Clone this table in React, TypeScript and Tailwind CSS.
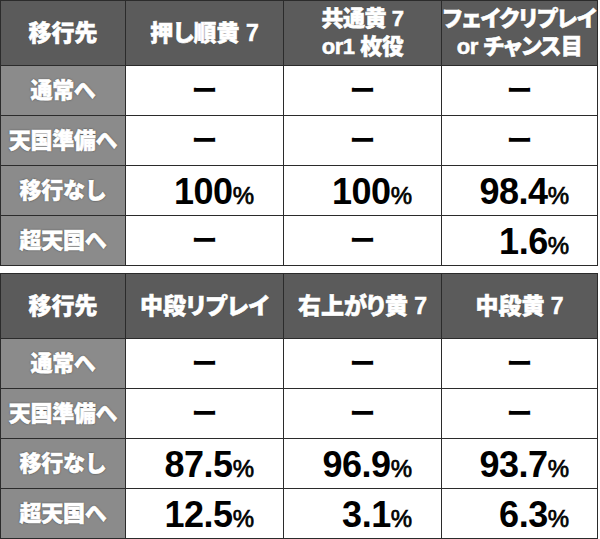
import React from 'react'

type Cell = string | { num: string }

interface TableData {
  heads: string[][]
  rows: { label: string; cells: Cell[] }[]
}

const DASH = 'ー'

const tables: TableData[] = [
  {
    heads: [['移行先'], ['押し順黄 7'], ['共通黄 7', 'or1 枚役'], ['フェイクリプレイ', 'or チャンス目']],
    rows: [
      { label: '通常へ', cells: [DASH, DASH, DASH] },
      { label: '天国準備へ', cells: [DASH, DASH, DASH] },
      { label: '移行なし', cells: [{ num: '100' }, { num: '100' }, { num: '98.4' }] },
      { label: '超天国へ', cells: [DASH, DASH, { num: '1.6' }] },
    ],
  },
  {
    heads: [['移行先'], ['中段リプレイ'], ['右上がり黄 7'], ['中段黄 7']],
    rows: [
      { label: '通常へ', cells: [DASH, DASH, DASH] },
      { label: '天国準備へ', cells: [DASH, DASH, DASH] },
      { label: '移行なし', cells: [{ num: '87.5' }, { num: '96.9' }, { num: '93.7' }] },
      { label: '超天国へ', cells: [{ num: '12.5' }, { num: '3.1' }, { num: '6.3' }] },
    ],
  },
]

function Table({ data }: { data: TableData }) {
  return (
    <div className="grid w-[598px] grid-cols-[124px_157px_157px_155px] gap-px bg-[#2b2b2b] p-px">
      {data.heads.map((lines, i) => (
        <div
          key={i}
          className={`flex h-[64px] flex-col items-center justify-center bg-[#5b5b5b] font-extrabold leading-[28px] text-white [font-feature-settings:'palt'] [-webkit-text-stroke:0.6px_white] [text-shadow:0_0_1px_#222] ${
            lines.length > 1 ? 'text-[22px] tracking-[-0.5px]' : 'text-[23px]'
          }`}
        >
          {lines.map(l => (
            <span key={l}>{l}</span>
          ))}
        </div>
      ))}
      {data.rows.map(row => (
        <React.Fragment key={row.label}>
          <div className="flex h-[49px] items-center justify-center bg-[#8b8b8b] text-[22px] font-extrabold tracking-[-0.3px] text-white [-webkit-text-stroke:0.6px_white] [text-shadow:0_0_2px_#3a3a3a,0_0_1px_#3a3a3a]">
            {row.label}
          </div>
          {row.cells.map((c, j) => (
            <div key={j} className="flex h-[49px] items-center justify-center bg-white text-black">
              {typeof c === 'string' ? (
                <span className="text-[26px] font-bold leading-none">{c}</span>
              ) : (
                <span className="inline-block w-[98px] pt-[2px] text-right leading-none tracking-[-0.5px]">
                  <span className="text-[36px] font-bold">{c.num}</span>
                  <span className="text-[24px] font-normal [-webkit-text-stroke:0.7px_black]">%</span>
                </span>
              )}
            </div>
          ))}
        </React.Fragment>
      ))}
    </div>
  )
}

export default function App() {
  return (
    <div className="flex h-[539px] w-[600px] flex-col gap-[7px] bg-white font-['Liberation_Sans','Noto_Sans_CJK_JP',sans-serif]">
      {tables.map((t, i) => (
        <Table key={i} data={t} />
      ))}
    </div>
  )
}
